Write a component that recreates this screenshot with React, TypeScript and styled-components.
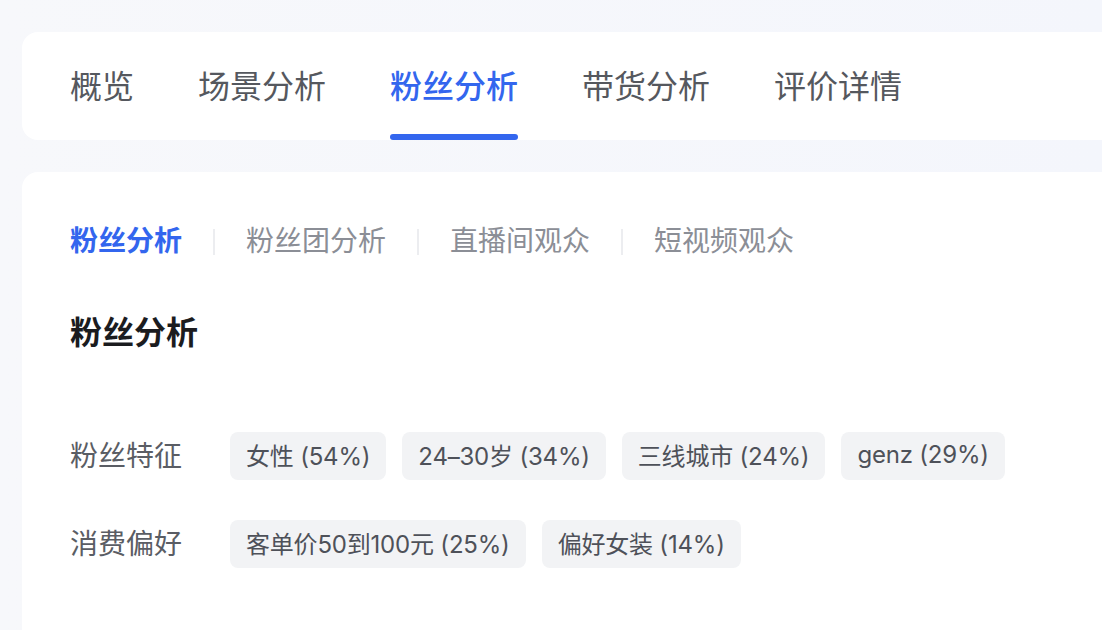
import styled, { createGlobalStyle } from "styled-components";

const GlobalStyle = createGlobalStyle`
  html, body {
    margin: 0;
    padding: 0;
    background: #f6f7fb;
    overflow: hidden;
  }
  body {
    font-family: "Liberation Sans", "Noto Sans CJK SC", sans-serif;
  }
`;

const Page = styled.div`
  width: 1102px;
  height: 630px;
  padding: 32px 0 0 22px;
  box-sizing: border-box;
  display: flex;
  flex-direction: column;
  gap: 32px;
  overflow: hidden;
  background: linear-gradient(90deg, #f7f8fb 0%, #f4f6fc 100%);
`;

const Card = styled.div`
  background: #ffffff;
`;

const TabBar = styled(Card)`
  height: 108px;
  flex-shrink: 0;
  border-radius: 16px 0 0 16px;
  display: flex;
  align-items: stretch;
  gap: 64px;
  padding-left: 48px;
`;

const Tab = styled.div<{ $active?: boolean }>`
  position: relative;
  display: flex;
  align-items: center;
  padding-bottom: 4px;
  font-size: 32px;
  font-weight: ${(p) => (p.$active ? 500 : 400)};
  color: ${(p) => (p.$active ? "#3366ee" : "#55585e")};

  &::after {
    content: "";
    display: ${(p) => (p.$active ? "block" : "none")};
    position: absolute;
    left: 0;
    right: 0;
    bottom: 0;
    height: 6px;
    border-radius: 3px;
    background: #3366ee;
  }
`;

const Panel = styled(Card)`
  flex: 1;
  border-radius: 16px 0 0 0;
  padding: 50px 0 0 48px;
  display: flex;
  flex-direction: column;
`;

const SubTabs = styled.div`
  display: flex;
  align-items: center;
  height: 40px;
`;

const SubTab = styled.div<{ $active?: boolean }>`
  font-size: 28px;
  line-height: 40px;
  font-weight: ${(p) => (p.$active ? 600 : 400)};
  color: ${(p) => (p.$active ? "#3366ee" : "#8b8e96")};
`;

const Divider = styled.div`
  width: 2px;
  height: 26px;
  margin: 0 31px;
  background: #ecedf0;
`;

const Heading = styled.h2`
  margin: 51px 0 0 0;
  font-size: 32px;
  line-height: 40px;
  font-weight: 700;
  color: #1b1c1f;
`;

const Rows = styled.div`
  margin-top: 79px;
  display: flex;
  flex-direction: column;
  gap: 40px;
`;

const Row = styled.div`
  display: flex;
  align-items: center;
`;

const Label = styled.div`
  width: 160px;
  flex-shrink: 0;
  padding-bottom: 4px;
  font-size: 28px;
  color: #5a5d64;
`;

const Tags = styled.div`
  display: flex;
  gap: 16px;
`;

const Tag = styled.div`
  height: 48px;
  padding: 0 16px 3px;
  box-sizing: border-box;
  display: flex;
  align-items: center;
  border-radius: 8px;
  background: #f2f3f5;
  font-family: "Inter", "Noto Sans CJK SC", sans-serif;
  font-size: 24px;
  letter-spacing: -0.2px;
  color: #4e5159;
  white-space: nowrap;
`;

const mainTabs = ["概览", "场景分析", "粉丝分析", "带货分析", "评价详情"];
const subTabs = ["粉丝分析", "粉丝团分析", "直播间观众", "短视频观众"];
const rows = [
  {
    label: "粉丝特征",
    tags: ["女性 (54%)", "24–30岁 (34%)", "三线城市 (24%)", "genz (29%)"],
  },
  {
    label: "消费偏好",
    tags: ["客单价50到100元 (25%)", "偏好女装 (14%)"],
  },
];

const App = () => {
  return (
    <>
      <GlobalStyle />
      <Page>
        <TabBar>
          {mainTabs.map((t) => (
            <Tab key={t} $active={t === "粉丝分析"}>
              {t}
            </Tab>
          ))}
        </TabBar>
        <Panel>
          <SubTabs>
            {subTabs.map((t, i) => (
              <>
                {i > 0 && <Divider key={"d" + i} />}
                <SubTab key={t} $active={i === 0}>
                  {t}
                </SubTab>
              </>
            ))}
          </SubTabs>
          <Heading>粉丝分析</Heading>
          <Rows>
            {rows.map((r) => (
              <Row key={r.label}>
                <Label>{r.label}</Label>
                <Tags>
                  {r.tags.map((t) => (
                    <Tag key={t}>{t}</Tag>
                  ))}
                </Tags>
              </Row>
            ))}
          </Rows>
        </Panel>
      </Page>
    </>
  );
};

export default App;
